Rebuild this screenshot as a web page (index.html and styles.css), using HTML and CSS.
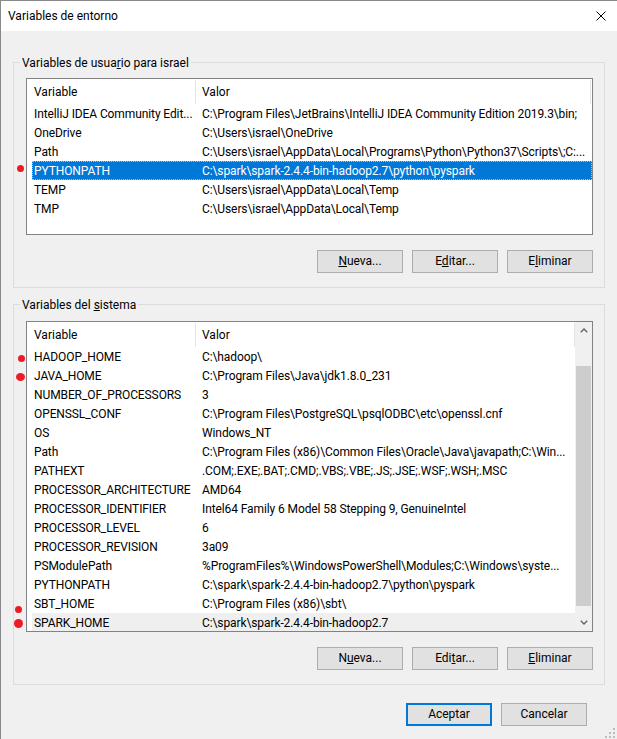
FILE: index.html
```html
<!DOCTYPE html>
<html lang="es">
<head>
<meta charset="utf-8">
<title>Variables de entorno</title>
<link rel="stylesheet" href="styles.css">
</head>
<body>
<div class="window">
  <div class="titlebar">
    <span class="title">Variables de entorno</span>
    <span class="close">
      <svg width="10" height="10" viewBox="0 0 10 10"><path d="M0.5 0.5 L9.5 9.5 M9.5 0.5 L0.5 9.5" stroke="#000" stroke-width="1" fill="none"/></svg>
    </span>
  </div>

  <div class="content">
    <div class="group">
      <div class="group-label">Variables de usua<u>r</u>io para israel</div>
      <div class="list list-user">
        <div class="view">
          <div class="hdr">
            <div class="h1">Variable</div>
            <div class="h2">Valor</div>
          </div>
          <div class="row"><span class="c1">IntelliJ IDEA Community Edit...</span><span class="c2">C:\Program Files\JetBrains\IntelliJ IDEA Community Edition 2019.3\bin;</span></div>
          <div class="row"><span class="c1">OneDrive</span><span class="c2">C:\Users\israel\OneDrive</span></div>
          <div class="row"><span class="c1">Path</span><span class="c2">C:\Users\israel\AppData\Local\Programs\Python\Python37\Scripts\;C:...</span></div>
          <div class="row sel"><span class="c1">PYTHONPATH</span><span class="c2">C:\spark\spark-2.4.4-bin-hadoop2.7\python\pyspark</span></div>
          <div class="row"><span class="c1">TEMP</span><span class="c2">C:\Users\israel\AppData\Local\Temp</span></div>
          <div class="row"><span class="c1">TMP</span><span class="c2">C:\Users\israel\AppData\Local\Temp</span></div>
        </div>
      </div>
      <div class="btns btns-user">
        <button class="btn"><u>N</u>ueva...</button>
        <button class="btn">E<u>d</u>itar...</button>
        <button class="btn">E<u>l</u>iminar</button>
      </div>
    </div>

    <div class="group group-sys">
      <div class="group-label">Variables del <u>s</u>istema</div>
      <div class="list list-sys">
        <div class="view">
          <div class="hdr">
            <div class="h1">Variable</div>
            <div class="h2">Valor</div>
          </div>
          <div class="row"><span class="c1">HADOOP_HOME</span><span class="c2">C:\hadoop\</span></div>
          <div class="row"><span class="c1">JAVA_HOME</span><span class="c2">C:\Program Files\Java\jdk1.8.0_231</span></div>
          <div class="row"><span class="c1">NUMBER_OF_PROCESSORS</span><span class="c2">3</span></div>
          <div class="row"><span class="c1">OPENSSL_CONF</span><span class="c2">C:\Program Files\PostgreSQL\psqlODBC\etc\openssl.cnf</span></div>
          <div class="row"><span class="c1">OS</span><span class="c2">Windows_NT</span></div>
          <div class="row"><span class="c1">Path</span><span class="c2">C:\Program Files (x86)\Common Files\Oracle\Java\javapath;C:\Win...</span></div>
          <div class="row"><span class="c1">PATHEXT</span><span class="c2">.COM;.EXE;.BAT;.CMD;.VBS;.VBE;.JS;.JSE;.WSF;.WSH;.MSC</span></div>
          <div class="row"><span class="c1">PROCESSOR_ARCHITECTURE</span><span class="c2">AMD64</span></div>
          <div class="row"><span class="c1">PROCESSOR_IDENTIFIER</span><span class="c2">Intel64 Family 6 Model 58 Stepping 9, GenuineIntel</span></div>
          <div class="row"><span class="c1">PROCESSOR_LEVEL</span><span class="c2">6</span></div>
          <div class="row"><span class="c1">PROCESSOR_REVISION</span><span class="c2">3a09</span></div>
          <div class="row"><span class="c1">PSModulePath</span><span class="c2">%ProgramFiles%\WindowsPowerShell\Modules;C:\Windows\syste...</span></div>
          <div class="row"><span class="c1">PYTHONPATH</span><span class="c2">C:\spark\spark-2.4.4-bin-hadoop2.7\python\pyspark</span></div>
          <div class="row"><span class="c1">SBT_HOME</span><span class="c2">C:\Program Files (x86)\sbt\</span></div>
          <div class="row hot"><span class="c1">SPARK_HOME</span><span class="c2">C:\spark\spark-2.4.4-bin-hadoop2.7</span></div>
        </div>
        <div class="sb">
          <div class="sb-btn">
            <svg width="8" height="5" viewBox="0 0 8 5"><path d="M0.8 4.2 L4 1 L7.2 4.2" stroke="#606060" stroke-width="1.3" fill="none"/></svg>
          </div>
          <div class="sb-track"><div class="sb-thumb"></div></div>
          <div class="sb-btn">
            <svg width="8" height="5" viewBox="0 0 8 5"><path d="M0.8 0.8 L4 4 L7.2 0.8" stroke="#606060" stroke-width="1.3" fill="none"/></svg>
          </div>
        </div>
      </div>
      <div class="btns btns-sys">
        <button class="btn">N<u>u</u>eva...</button>
        <button class="btn">Edi<u>t</u>ar...</button>
        <button class="btn"><u>E</u>liminar</button>
      </div>
    </div>

    <div class="footer">
      <button class="btn btn-default">Aceptar</button>
      <button class="btn">Cancelar</button>
    </div>
  </div>

  <span class="dot dot-1"></span>
  <span class="dot dot-2"></span>
  <span class="dot dot-3"></span>
  <span class="dot dot-4"></span>
  <span class="dot dot-5"></span>

  <svg class="grip" width="10" height="10" viewBox="0 0 10 10">
    <rect x="8" y="0" width="2" height="2" fill="#bcbcbc"/>
    <rect x="4" y="4" width="2" height="2" fill="#bcbcbc"/>
    <rect x="8" y="4" width="2" height="2" fill="#bcbcbc"/>
    <rect x="0" y="8" width="2" height="2" fill="#bcbcbc"/>
    <rect x="4" y="8" width="2" height="2" fill="#bcbcbc"/>
    <rect x="8" y="8" width="2" height="2" fill="#bcbcbc"/>
  </svg>
</div>
</body>
</html>
```

FILE: styles.css
```css
html, body {
  margin: 0;
  padding: 0;
}

body {
  width: 617px;
  height: 739px;
  overflow: hidden;
  background: #f0f0f0;
  font-family: "Segoe UI", Roboto, "Liberation Sans", sans-serif;
  font-size: 12px;
  color: #000;
}

.window {
  position: relative;
  height: 739px;
  box-sizing: border-box;
  border-left: 1px solid #8a8a8a;
  border-top: 1px solid #8a8a8a;
  background: #f0f0f0;
}

.titlebar {
  height: 30px;
  background: #fff;
  display: flex;
  align-items: center;
  justify-content: space-between;
  padding-left: 7px;
}

.title {
  line-height: 30px;
}

.close {
  width: 32px;
  height: 30px;
  display: flex;
  align-items: center;
  justify-content: center;
}

.content {
  padding: 31px 12px 0;
}

.group {
  border: 1px solid #dcdcdc;
  padding: 0 11px 14px 12px;
}

.group-sys {
  margin-top: 16px;
  padding-bottom: 14px;
}

.group-label {
  width: fit-content;
  margin: -8px 0 0 -6px;
  padding: 0 2px;
  line-height: 16px;
  height: 16px;
  background: #f0f0f0;
}

.list {
  margin-top: 7px;
  border: 1px solid #828282;
  background: #fff;
  box-sizing: border-box;
  overflow: hidden;
  display: flex;
}

.list-user {
  height: 157px;
}

.list-sys {
  margin-top: 8px;
  height: 311px;
}

.view {
  flex: 1;
  min-width: 0;
  overflow: hidden;
}

.hdr {
  display: flex;
  height: 25px;
  box-sizing: border-box;
  padding-top: 1px;
  line-height: 25px;
}

.h1 {
  width: 169px;
  flex: none;
  box-sizing: border-box;
  padding-left: 7px;
  border-right: 1px solid #e5e5e5;
}

.h2 {
  flex: 1;
  padding-left: 6px;
  border-right: 1px solid #e5e5e5;
}

.list-user .hdr {
  margin-right: 1px;
}

.row {
  display: flex;
  height: 19px;
  box-sizing: border-box;
  padding-top: 1px;
  line-height: 18px;
  margin-left: 5px;
  white-space: nowrap;
  letter-spacing: -0.1px;
}

.c1 {
  width: 168px;
  flex: none;
  box-sizing: border-box;
  padding-left: 2px;
  overflow: hidden;
}

.c2 {
  flex: 1;
  min-width: 0;
  padding-left: 2px;
  overflow: hidden;
}

.row.sel {
  background: #0078d7;
  color: #fff;
  outline: 1px dotted #9ccbf0;
  outline-offset: -1px;
}

.row.hot {
  background: #efefef;
}

.sb {
  width: 17px;
  flex: none;
  background: #f0f0f0;
  display: flex;
  flex-direction: column;
}

.sb-btn {
  height: 17px;
  flex: none;
  display: flex;
  align-items: center;
  justify-content: center;
}

.sb-track {
  flex: 1;
}

.sb-thumb {
  margin: 27px 1px 0;
  height: 240px;
  background: #cdcdcd;
}

.btns {
  display: flex;
  justify-content: flex-end;
  gap: 9px;
  margin-top: 15px;
}

.btn {
  width: 86px;
  height: 23px;
  box-sizing: border-box;
  border: 1px solid #adadad;
  background: #e1e1e1;
  font: inherit;
  color: #000;
  padding: 0;
  margin: 0;
  line-height: 21px;
  text-align: center;
}

.btn-default {
  border: 2px solid #0078d7;
  line-height: 19px;
}

.footer {
  display: flex;
  justify-content: flex-end;
  gap: 9px;
  margin-top: 18px;
  padding-right: 18px;
}

.dot {
  position: absolute;
  border-radius: 50%;
  background: #ed1c24;
}

.dot-1 { left: 16px; top: 164px; width: 7px; height: 7px; }
.dot-2 { left: 17px; top: 354px; width: 7px; height: 7px; }
.dot-3 { left: 15px; top: 372px; width: 9px; height: 8px; }
.dot-4 { left: 14px; top: 605px; width: 7px; height: 7px; }
.dot-5 { left: 13px; top: 618px; width: 9px; height: 9px; }

.grip {
  position: absolute;
  left: 604px;
  top: 727px;
}
```
